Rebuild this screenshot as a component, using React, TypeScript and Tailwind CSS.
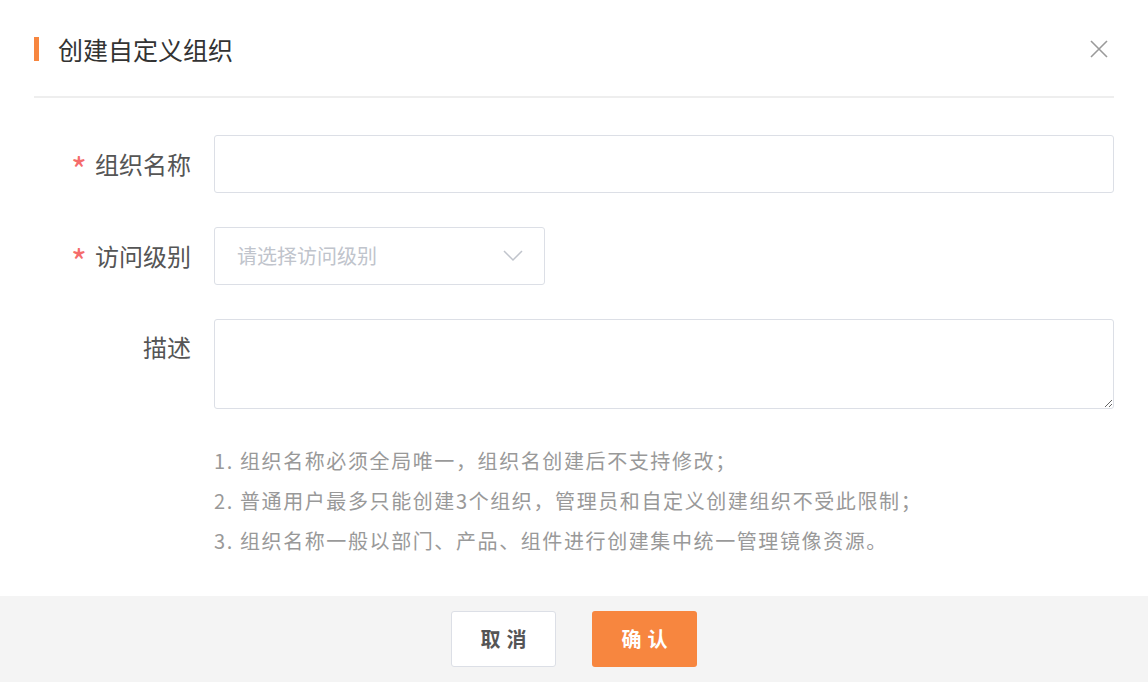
import React from "react";

const font = { fontFamily: '"Noto Sans CJK SC", "Noto Sans", sans-serif' };

export default function App() {
  return (
    <div className="w-[1148px] h-[682px] bg-white flex flex-col overflow-hidden" style={font}>
      {/* Header */}
      <div className="mx-[34px] h-[98px] flex items-center justify-between border-b-2 border-[#eeeeee] pt-[2px]">
        <div className="flex items-center">
          <span className="w-[5px] h-[24px] bg-[#f7863f]" />
          <span className="ml-[19px] text-[25px] leading-none text-[#333333]">创建自定义组织</span>
        </div>
        <button className="mr-[5px] text-[#9a9a9a]">
          <svg width="20" height="20" viewBox="0 0 20 20" fill="none" stroke="currentColor" strokeWidth="1.6">
            <path d="M2 2 L18 18 M18 2 L2 18" />
          </svg>
        </button>
      </div>

      {/* Form */}
      <div className="flex-1 pl-[34px] pr-[34px] pt-[37px] flex flex-col">
        <div className="flex items-center h-[58px]">
          <label className="w-[180px] pr-[23px] flex justify-end items-center text-[24px] text-[#555555]">
            <span className="text-[#f56c6c] mr-[8px] text-[34px] leading-none pt-[9px]">*</span>组织名称
          </label>
          <div className="flex-1 h-[58px] border border-[#dcdfe6] rounded-[3px]" />
        </div>

        <div className="flex items-center h-[58px] mt-[34px]">
          <label className="w-[180px] pr-[23px] flex justify-end items-center text-[24px] text-[#555555]">
            <span className="text-[#f56c6c] mr-[8px] text-[34px] leading-none pt-[9px]">*</span>访问级别
          </label>
          <div className="w-[331px] h-[58px] border border-[#dcdfe6] rounded-[3px] flex items-center justify-between pl-[22px] pr-[21px]">
            <span className="text-[20px] text-[#c0c4cc]">请选择访问级别</span>
            <svg width="20" height="12" viewBox="0 0 20 12" fill="none" stroke="#c0c4cc" strokeWidth="1.5">
              <path d="M1 1 L10 10 L19 1" />
            </svg>
          </div>
        </div>

        <div className="flex items-start mt-[34px]">
          <label className="w-[180px] pr-[23px] flex justify-end text-[24px] text-[#555555] pt-[12px] leading-[32px]">
            描述
          </label>
          <textarea className="flex-1 h-[90px] border border-[#dcdfe6] rounded-[3px] outline-none resize-y" />
        </div>

        <div className="ml-[180px] mt-[32px] text-[20px] leading-[40px] text-[#999999] tracking-[1.6px]">
          <p>1. 组织名称必须全局唯一，组织名创建后不支持修改；</p>
          <p>2. 普通用户最多只能创建3个组织，管理员和自定义创建组织不受此限制；</p>
          <p>3. 组织名称一般以部门、产品、组件进行创建集中统一管理镜像资源。</p>
        </div>
      </div>

      {/* Footer */}
      <div className="h-[86px] bg-[#f4f4f4] flex items-center justify-center gap-[36px]">
        <button className="w-[105px] h-[56px] bg-white border border-[#dcdfe6] rounded-[3px] text-[20px] font-bold text-[#555555] tracking-[6px] pl-[6px]">
          取消
        </button>
        <button className="w-[105px] h-[56px] bg-[#f7863f] rounded-[3px] text-[20px] font-bold text-white tracking-[6px] pl-[6px]">
          确认
        </button>
      </div>
    </div>
  );
}
